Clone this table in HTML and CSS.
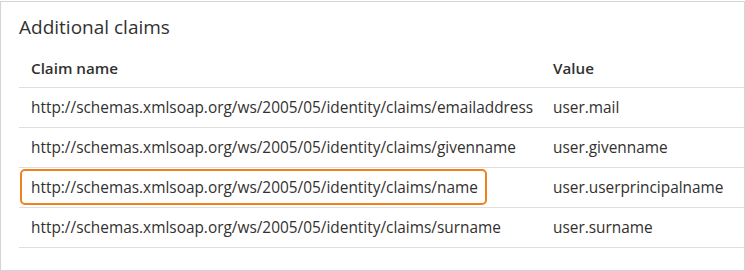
FILE: index.html
```html
<!DOCTYPE html>
<html>
<head>
<meta charset="utf-8">
<link rel="stylesheet" href="styles.css">
</head>
<body>
<div class="panel">
  <h2 class="title">Additional claims</h2>
  <div class="table">
    <div class="row head">
      <div class="cell">Claim name</div>
      <div class="cell">Value</div>
    </div>
    <div class="row">
      <div class="cell">http://schemas.xmlsoap.org/ws/2005/05/identity/claims/emailaddress</div>
      <div class="cell">user.mail</div>
    </div>
    <div class="row">
      <div class="cell">http://schemas.xmlsoap.org/ws/2005/05/identity/claims/givenname</div>
      <div class="cell">user.givenname</div>
    </div>
    <div class="row">
      <div class="cell"><span class="hl">http://schemas.xmlsoap.org/ws/2005/05/identity/claims/name</span></div>
      <div class="cell">user.userprincipalname</div>
    </div>
    <div class="row">
      <div class="cell">http://schemas.xmlsoap.org/ws/2005/05/identity/claims/surname</div>
      <div class="cell">user.surname</div>
    </div>
  </div>
</div>
</body>
</html>
```
FILE: styles.css
```css
html, body {
  margin: 0;
  padding: 0;
  background: #ffffff;
}
body {
  font-family: "Open Sans", "Noto Sans", sans-serif;
  color: #323130;
}
.panel {
  margin-top: 1px;
  height: 268px;
  border: 1px solid #d4d4d4;
  padding-left: 18px;
  box-sizing: content-box;
  width: 725px;
}
.title {
  margin: 0;
  font-weight: 400;
  font-size: 19px;
  line-height: 26px;
  padding-top: 12px;
  height: 34px;
}
.table {
  display: flex;
  flex-direction: column;
}
.row {
  display: grid;
  grid-template-columns: 522px 1fr;
  height: 39px;
  border-bottom: 1px solid #e1dfdd;
  align-items: center;
  font-size: 15.4px;
}
.row.head {
  font-weight: 600;
  font-size: 15.2px;
}
.cell {
  padding-left: 12px;
  white-space: nowrap;
}
.hl {
  position: relative;
}
.hl::after {
  content: "";
  position: absolute;
  left: -11px;
  right: -9px;
  top: -8px;
  bottom: -7px;
  border: 2.5px solid #f0821e;
  border-radius: 5px;
}
```
